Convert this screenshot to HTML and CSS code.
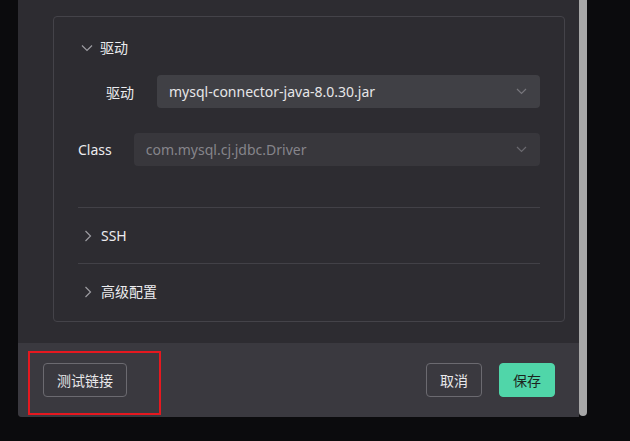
FILE: index.html
```html
<!DOCTYPE html>
<html lang="zh">
<head>
<meta charset="utf-8">
<link rel="stylesheet" href="styles.css">
</head>
<body>
<div class="frame">
  <div class="dialog">
    <div class="dialog-body">
      <div class="card">
        <div class="section open">
          <div class="section-head">
            <svg class="chev-down" width="12" height="8" viewBox="0 0 12 8"><path d="M1 1.5 L6 6.5 L11 1.5" fill="none" stroke="#9c9ca1" stroke-width="1.2"/></svg>
            <span>驱动</span>
          </div>
          <div class="form-row indent">
            <label class="label">驱动</label>
            <div class="select primary">
              <span>mysql-connector-java-8.0.30.jar</span>
              <svg class="sel-chev" width="11" height="7" viewBox="0 0 11 7"><path d="M1 1 L5.5 5.5 L10 1" fill="none" stroke="#77767c" stroke-width="1.2"/></svg>
            </div>
          </div>
          <div class="form-row">
            <label class="label">Class</label>
            <div class="select disabled">
              <span>com.mysql.cj.jdbc.Driver</span>
              <svg class="sel-chev" width="11" height="7" viewBox="0 0 11 7"><path d="M1 1 L5.5 5.5 L10 1" fill="none" stroke="#6a696f" stroke-width="1.2"/></svg>
            </div>
          </div>
        </div>
        <div class="section collapsed">
          <div class="section-head">
            <svg class="chev-right" width="8" height="12" viewBox="0 0 8 12"><path d="M1.5 1 L6.5 6 L1.5 11" fill="none" stroke="#9c9ca1" stroke-width="1.2"/></svg>
            <span>SSH</span>
          </div>
        </div>
        <div class="section collapsed last">
          <div class="section-head">
            <svg class="chev-right" width="8" height="12" viewBox="0 0 8 12"><path d="M1.5 1 L6.5 6 L1.5 11" fill="none" stroke="#9c9ca1" stroke-width="1.2"/></svg>
            <span class="cjk-up">高级配置</span>
          </div>
        </div>
      </div>
    </div>
    <div class="dialog-footer">
      <div class="highlight">
        <button class="btn">测试链接</button>
      </div>
      <div class="actions">
        <button class="btn">取消</button>
        <button class="btn save">保存</button>
      </div>
    </div>
  </div>
  <div class="scrollbar"></div>
</div>
</body>
</html>
```

FILE: styles.css
```css
* { box-sizing: border-box; }
html, body {
  margin: 0;
  padding: 0;
  background: #0b0b0d;
  width: 630px;
  height: 441px;
  overflow: hidden;
  font-family: "Noto Sans", "Noto Sans CJK SC", sans-serif;
  font-size: 14px;
}
.frame {
  display: flex;
  margin-left: 18px;
  height: 417px;
}
.dialog {
  width: 561px;
  display: flex;
  flex-direction: column;
  background: #2d2c31;
  border-bottom-left-radius: 4px;
}
.scrollbar {
  width: 8px;
  height: 416px;
  background: #a7a7a7;
  border-bottom-left-radius: 4px;
  border-bottom-right-radius: 4px;
}
.dialog-body {
  flex: 1;
  padding: 16px 14px 0 35px;
}
.card {
  border: 1px solid #444349;
  border-radius: 4px;
  padding: 0 24px;
  height: 306px;
}
.section.open {
  padding-top: 19px;
  padding-bottom: 41px;
  border-bottom: 1px solid #424147;
}
.section-head {
  display: flex;
  align-items: center;
  gap: 8px;
  color: #ececef;
  height: 22px;
}
.section.open .section-head { margin-bottom: 17px; padding-left: 3px; gap: 7px; }
.chev-down { margin-top: 1px; }
.section.collapsed .section-head {
  height: 55px;
  padding-left: 6px;
  gap: 9px;
}
.cjk-up { position: relative; top: -1px; }
.section.collapsed { border-bottom: 1px solid #424147; }
.section.collapsed.last { border-bottom: none; }
.form-row {
  display: flex;
  align-items: center;
  gap: 22px;
  margin-bottom: 25px;
}
.form-row:last-child { margin-bottom: 0; }
.form-row.indent { padding-left: 28px; gap: 23px; }
.label { color: #ececef; }
.select {
  flex: 1;
  height: 33px;
  border-radius: 4px;
  display: flex;
  align-items: center;
  justify-content: space-between;
  padding: 0 13px 0 12px;
}
.select.primary { background: #404045; color: #e6e6e8; }
.select.disabled { background: #38373c; color: #86858b; }
.dialog-footer {
  height: 74px;
  background: #3a393f;
  display: flex;
  align-items: center;
  justify-content: space-between;
  padding: 0 24px 0 10px;
  border-bottom-left-radius: 4px;
}
.highlight {
  border: 2px solid #e5181f;
  width: 133px;
  height: 64px;
  margin-top: 6px;
  display: flex;
  align-items: center;
  padding-left: 13px;
  padding-bottom: 6px;
}
.actions { display: flex; gap: 17px; }
.btn {
  font-family: inherit;
  font-size: 14px;
  height: 34px;
  padding: 0 13px;
  background: transparent;
  color: #e8e8ea;
  border: 1px solid #6b6a70;
  border-radius: 4px;
}
.btn.save {
  background: #50d6a9;
  border-color: #50d6a9;
  color: #1d2420;
}
```
